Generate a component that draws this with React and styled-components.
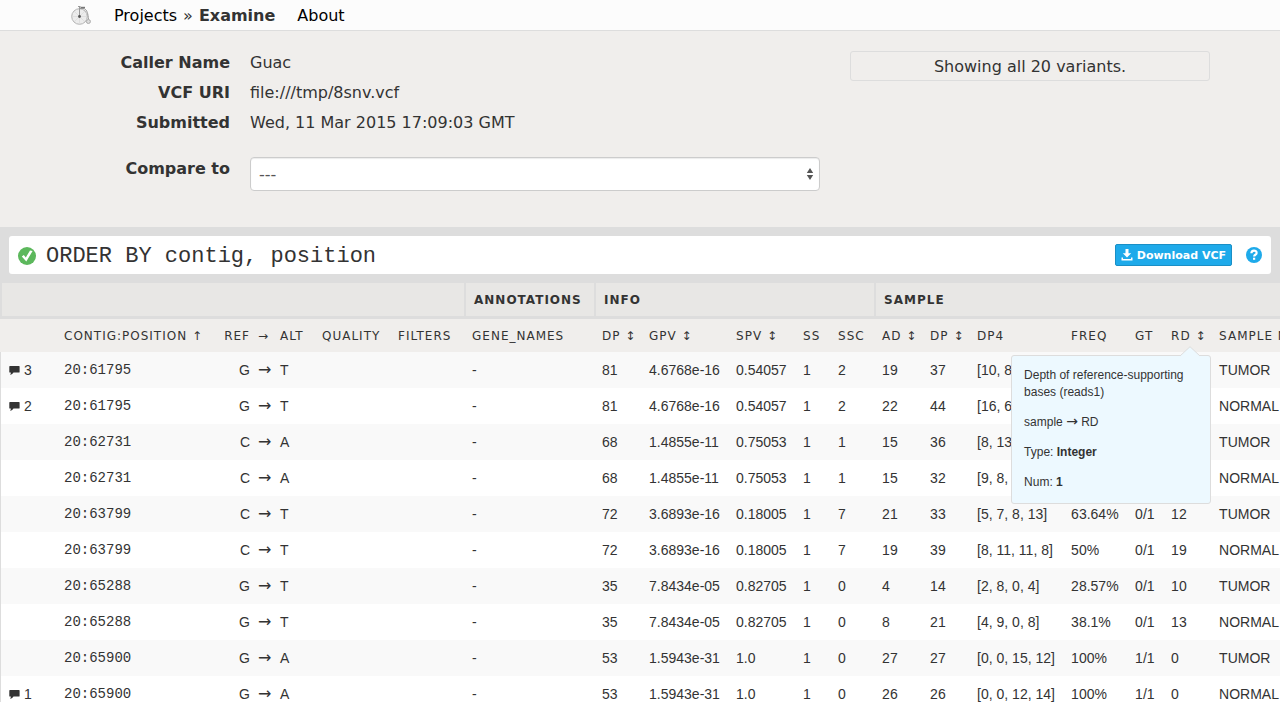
import React from 'react';
import styled, { createGlobalStyle, css } from 'styled-components';

const sans = '"DejaVu Sans", Verdana, sans-serif';
const grotesk = '"Liberation Sans", Helvetica, Arial, sans-serif';
const mono = '"Liberation Mono", "Courier New", monospace';

const GlobalStyle = createGlobalStyle`
  *, *::before, *::after { box-sizing: border-box; }
  html { scrollbar-width: none; }
  body {
    margin: 0;
    background: #fff;
    color: #333;
    font: 16px/30px ${sans};
  }
`;

const container = css`
  max-width: 1140px;
  margin: 0 auto;
`;

const NavBar = styled.header`
  background: #fcfcfc;
  border-bottom: 1px solid #ddd;
`;

const Nav = styled.nav`
  ${container}
  display: flex;
  align-items: center;
  height: 30px;
  padding-top: 2px;
`;

const Logo = styled.svg`
  width: 24px;
  height: 22px;
  margin-right: 20px;
`;

const NavLink = styled.a`
  color: ${(p) => (p.$active ? '#333' : '#000')};
  font-weight: ${(p) => (p.$active ? 'bold' : 'normal')};
  text-decoration: none;
`;

const Crumb = styled.span`
  margin: 0 6px;
`;

const NavGap = styled.span`
  width: 22px;
`;

const Summary = styled.section`
  background: #f0eeec;
  padding: 17px 0 36px;
`;

const SummaryInner = styled.div`
  ${container}
  display: grid;
  grid-template-columns: 1fr 360px;
  column-gap: 30px;
  align-items: start;
`;

const Details = styled.dl`
  display: grid;
  grid-template-columns: 160px 1fr;
  column-gap: 20px;
  margin: 0;
`;

const Term = styled.dt`
  font-weight: bold;
  text-align: right;
  ${(p) => p.$spaced && 'margin-top: 16px;'}
`;

const Value = styled.dd`
  margin: 0;
  ${(p) => p.$spaced && 'margin-top: 19px;'}
`;

const SelectBox = styled.div`
  position: relative;
`;

const Select = styled.select`
  display: block;
  width: 100%;
  height: 34px;
  padding: 0 8px;
  appearance: none;
  background: #fff;
  border: 1px solid #ccc;
  border-radius: 4px;
  box-shadow: inset 0 1px 1px rgba(0, 0, 0, 0.08);
  color: #555;
  font: 16px ${sans};
`;

const SelectArrows = styled.svg`
  position: absolute;
  right: 6px;
  top: 11px;
  width: 8px;
  height: 12px;
  pointer-events: none;
`;

const Notice = styled.p`
  margin: 3px 0 0;
  padding-top: 2px;
  border: 1px solid #ddd;
  border-radius: 3px;
  line-height: 26px;
  text-align: center;
`;

const QueryBar = styled.section`
  background: #ddd;
  padding: 9px 9px 8px;
`;

const QueryForm = styled.form`
  display: flex;
  align-items: center;
  height: 38px;
  padding: 0 9px;
  background: #fff;
  border-radius: 3px;
`;

const StatusIcon = styled.svg`
  width: 18px;
  height: 18px;
  flex: none;
  margin-top: 2px;
`;

const QueryInput = styled.input`
  flex: 1;
  min-width: 0;
  height: 36px;
  padding: 2px 10px 0;
  border: 0;
  outline: 0;
  background: transparent;
  color: #333;
  font: 22px ${mono};
`;

const DownloadButton = styled.button`
  display: flex;
  align-items: center;
  gap: 4px;
  height: 22px;
  padding: 0 5px;
  background: #1eaaea;
  border: 1px solid #1a8fc6;
  border-radius: 2px;
  color: #fff;
  font: bold 11px ${sans};
  white-space: nowrap;
`;

const HelpLink = styled.a`
  display: flex;
  margin-left: 14px;
`;

const TableScroller = styled.main`
  overflow-x: auto;
  scrollbar-width: none;
`;

const VariantTable = styled.table`
  width: 1350px;
  table-layout: fixed;
  border-collapse: separate;
  border-spacing: 0;
  text-align: left;
  font: 14px ${grotesk};
`;

const GroupHead = styled.th`
  height: 37px;
  padding: 0 8px;
  background: #e8e7e5;
  border: solid #ddd;
  border-width: 1px 0 3px 2px;
  font: bold 12px ${sans};
  letter-spacing: 1px;
`;

const ColumnHead = styled.th`
  position: relative;
  height: 33px;
  padding: 0 0 0 8px;
  background: #f0eeec;
  font: 12px ${sans};
  letter-spacing: 1px;
  white-space: nowrap;
`;

const Row = styled.tr`
  background: #fff;
  &:nth-child(odd) { background: #f9f9f9; }
`;

const Cell = styled.td`
  height: 36px;
  padding: 0 0 0 8px;
  white-space: nowrap;
  ${(p) => p.$mono && `font-family: ${mono};`}
  &:first-child { border-left: 1px solid #ddd; }
`;

const Comments = styled.span`
  display: flex;
  align-items: center;
  gap: 4px;
`;

const Change = styled.span`
  display: grid;
  grid-template-columns: 26px 14px 1fr;
  column-gap: 8px;
  align-items: center;
  & > :first-child { text-align: right; }
`;

const Arrow = styled.span`
  font-family: ${sans};
  font-size: ${(p) => (p.$size ? `${p.$size}px` : 'inherit')};
  line-height: 12px;
`;

const Tooltip = styled.div`
  position: absolute;
  z-index: 2;
  top: 36px;
  right: 0;
  width: 200px;
  padding: 11px 12px 12px;
  background: #edf9ff;
  border: 1px solid #ddd;
  border-radius: 3px;
  font: 12px/17px ${grotesk};
  letter-spacing: normal;
  white-space: normal;
`;

const Pointer = styled.svg`
  position: absolute;
  top: -10px;
  right: 10px;
  width: 20px;
  height: 11px;
`;

const TipLine = styled.p`
  margin: 0 0 13px;
  &:last-child { margin: 0; }
`;

const COLUMN_WIDTHS = [56, 160, 98, 76, 74, 130, 47, 87, 67, 35, 44, 48, 47, 94, 64, 36, 48, 139];

const COLUMNS = [
  '', 'CONTIG:POSITION ↑', null, 'QUALITY', 'FILTERS', 'GENE_NAMES',
  'DP ↕', 'GPV ↕', 'SPV ↕', 'SS', 'SSC', 'AD ↕', 'DP ↕', 'DP4', 'FREQ', 'GT', 'RD ↕', 'SAMPLE NAME',
];

const VARIANTS = [
  [3, '20:61795', 'G', 'T', '81', '4.6768e-16', '0.54057', '1', '2', '19', '37', '[10, 8]', '', '', '', 'TUMOR'],
  [2, '20:61795', 'G', 'T', '81', '4.6768e-16', '0.54057', '1', '2', '22', '44', '[16, 6]', '', '', '', 'NORMAL'],
  [0, '20:62731', 'C', 'A', '68', '1.4855e-11', '0.75053', '1', '1', '15', '36', '[8, 13]', '', '', '', 'TUMOR'],
  [0, '20:62731', 'C', 'A', '68', '1.4855e-11', '0.75053', '1', '1', '15', '32', '[9, 8, 8]', '', '', '', 'NORMAL'],
  [0, '20:63799', 'C', 'T', '72', '3.6893e-16', '0.18005', '1', '7', '21', '33', '[5, 7, 8, 13]', '63.64%', '0/1', '12', 'TUMOR'],
  [0, '20:63799', 'C', 'T', '72', '3.6893e-16', '0.18005', '1', '7', '19', '39', '[8, 11, 11, 8]', '50%', '0/1', '19', 'NORMAL'],
  [0, '20:65288', 'G', 'T', '35', '7.8434e-05', '0.82705', '1', '0', '4', '14', '[2, 8, 0, 4]', '28.57%', '0/1', '10', 'TUMOR'],
  [0, '20:65288', 'G', 'T', '35', '7.8434e-05', '0.82705', '1', '0', '8', '21', '[4, 9, 0, 8]', '38.1%', '0/1', '13', 'NORMAL'],
  [0, '20:65900', 'G', 'A', '53', '1.5943e-31', '1.0', '1', '0', '27', '27', '[0, 0, 15, 12]', '100%', '1/1', '0', 'TUMOR'],
  [1, '20:65900', 'G', 'A', '53', '1.5943e-31', '1.0', '1', '0', '26', '26', '[0, 0, 12, 14]', '100%', '1/1', '0', 'NORMAL'],
];

function BicycleLogo() {
  return (
    <Logo viewBox="0 0 24 22" fill="none" aria-label="Home" role="img">
      <circle cx="9.500" cy="11.500" r="7.800" fill="#ececec" stroke="#b4b4b4" />
      <path d="M9.500 4v15M2 11.500h15M4 6l11 11M15 6L4 17" stroke="#d6d6d6" strokeWidth=".6" />
      <path d="M9.500 12V1.500M8 1.500h2.500M10 3.500h4c3.200 1.500 4 5 4.500 11" stroke="#999" />
      <path d="M10.500 2.500h4.500" stroke="#777" strokeWidth="1.400" />
      <circle cx="9.500" cy="11.500" r="1.400" fill="#555" />
      <circle cx="18.400" cy="16.500" r="2" stroke="#aaa" fill="#ddd" />
    </Logo>
  );
}

function CheckIcon() {
  return (
    <StatusIcon viewBox="0 0 18 18" aria-hidden="true">
      <circle cx="9" cy="9" r="9" fill="#5cb85c" />
      <path d="M3.800 9.600l2-1.500 2 2.400L12 3.400l2.600.6L8.300 14.600z" fill="#fff" />
    </StatusIcon>
  );
}

function DownloadIcon() {
  return (
    <svg width="12" height="12" viewBox="0 0 12 12" fill="#fff" aria-hidden="true">
      <path d="M4.500 0h3v4.200h2.700L6 8.500 1.800 4.200h2.700zM.5 8.500H2v1.500h8V8.500h1.500v3H.5z" />
    </svg>
  );
}

function HelpIcon() {
  return (
    <svg width="16" height="16" viewBox="0 0 16 16" aria-hidden="true">
      <circle cx="8" cy="8" r="8" fill="#1eaaea" />
      <path d="M5.400 6.300c0-3.400 5.200-3.400 5.200-.4 0 1.900-2.500 1.800-2.500 3.700" fill="none" stroke="#fff" strokeWidth="2.200" />
      <path d="M7 10.700h2.200v2.100H7z" fill="#fff" />
    </svg>
  );
}

function CommentIcon() {
  return (
    <svg width="11" height="10" viewBox="0 0 11 10" fill="#333" aria-hidden="true">
      <path d="M1 1h9q.6 0 .6.600v5.400q0 .600-.6.600H4.500Q3.500 9.300 1.200 9.900 2 8.600 1.800 7.600H1Q.3 7.600 .3 7V1.600Q.3 1 1 1z" />
    </svg>
  );
}

function ColumnTip() {
  return (
    <Tooltip role="tooltip">
      <Pointer viewBox="0 0 20 11" aria-hidden="true">
        <path d="M0 11V10L10 .7 20 10v1z" fill="#edf9ff" />
        <path d="M0 10L10 .7 20 10" fill="none" stroke="#ddd" />
      </Pointer>
      <TipLine>Depth of reference-supporting bases (reads1)</TipLine>
      <TipLine>sample <Arrow $size={14}>→</Arrow> RD</TipLine>
      <TipLine>Type: <b>Integer</b></TipLine>
      <TipLine>Num: <b>1</b></TipLine>
    </Tooltip>
  );
}

function ChangeLabel({ from, to, arrowSize }) {
  return (
    <Change>
      <span>{from}</span>
      <Arrow $size={arrowSize}>→</Arrow>
      <span>{to}</span>
    </Change>
  );
}

function VariantRow({ variant }) {
  const [comments, position, from, to, ...rest] = variant;
  return (
    <Row>
      <Cell>{comments > 0 && <Comments><CommentIcon />{comments}</Comments>}</Cell>
      <Cell $mono>{position}</Cell>
      <Cell><ChangeLabel from={from} to={to} arrowSize={16} /></Cell>
      <Cell />
      <Cell />
      <Cell>-</Cell>
      {rest.map((value, i) => <Cell key={i}>{value}</Cell>)}
    </Row>
  );
}

export default function App() {
  return (
    <>
      <GlobalStyle />
      <NavBar>
        <Nav>
          <BicycleLogo />
          <NavLink href="#projects">Projects</NavLink>
          <Crumb>»</Crumb>
          <NavLink href="#examine" $active>Examine</NavLink>
          <NavGap />
          <NavLink href="#about">About</NavLink>
        </Nav>
      </NavBar>
      <Summary>
        <SummaryInner>
          <Details>
            <Term>Caller Name</Term>
            <Value>Guac</Value>
            <Term>VCF URI</Term>
            <Value>file:///tmp/8snv.vcf</Value>
            <Term>Submitted</Term>
            <Value>Wed, 11 Mar 2015 17:09:03 GMT</Value>
            <Term $spaced><label htmlFor="compare">Compare to</label></Term>
            <Value $spaced>
              <SelectBox>
                <Select id="compare"><option>---</option></Select>
                <SelectArrows viewBox="0 0 8 12" fill="#555" aria-hidden="true">
                  <path d="M4 0l3.200 5H.8zM4 12L.8 7h6.400z" />
                </SelectArrows>
              </SelectBox>
            </Value>
          </Details>
          <Notice>Showing all 20 variants.</Notice>
        </SummaryInner>
      </Summary>
      <QueryBar>
        <QueryForm onSubmit={(e) => e.preventDefault()}>
          <CheckIcon />
          <QueryInput aria-label="Query" defaultValue="ORDER BY contig, position" spellCheck={false} />
          <DownloadButton type="button"><DownloadIcon />Download VCF</DownloadButton>
          <HelpLink href="#help" aria-label="Help"><HelpIcon /></HelpLink>
        </QueryForm>
      </QueryBar>
      <TableScroller>
        <VariantTable>
          <colgroup>
            {COLUMN_WIDTHS.map((width, i) => <col key={i} width={width} />)}
          </colgroup>
          <thead>
            <tr>
              <GroupHead colSpan={5} />
              <GroupHead>ANNOTATIONS</GroupHead>
              <GroupHead colSpan={5}>INFO</GroupHead>
              <GroupHead colSpan={7}>SAMPLE</GroupHead>
            </tr>
            <tr>
              {COLUMNS.map((name, i) => (
                <ColumnHead key={i}>
                  {name === null ? <ChangeLabel from="REF" to="ALT" /> : name}
                  {name === 'RD ↕' && <ColumnTip />}
                </ColumnHead>
              ))}
            </tr>
          </thead>
          <tbody>
            {VARIANTS.map((variant, i) => <VariantRow key={i} variant={variant} />)}
          </tbody>
        </VariantTable>
      </TableScroller>
    </>
  );
}
